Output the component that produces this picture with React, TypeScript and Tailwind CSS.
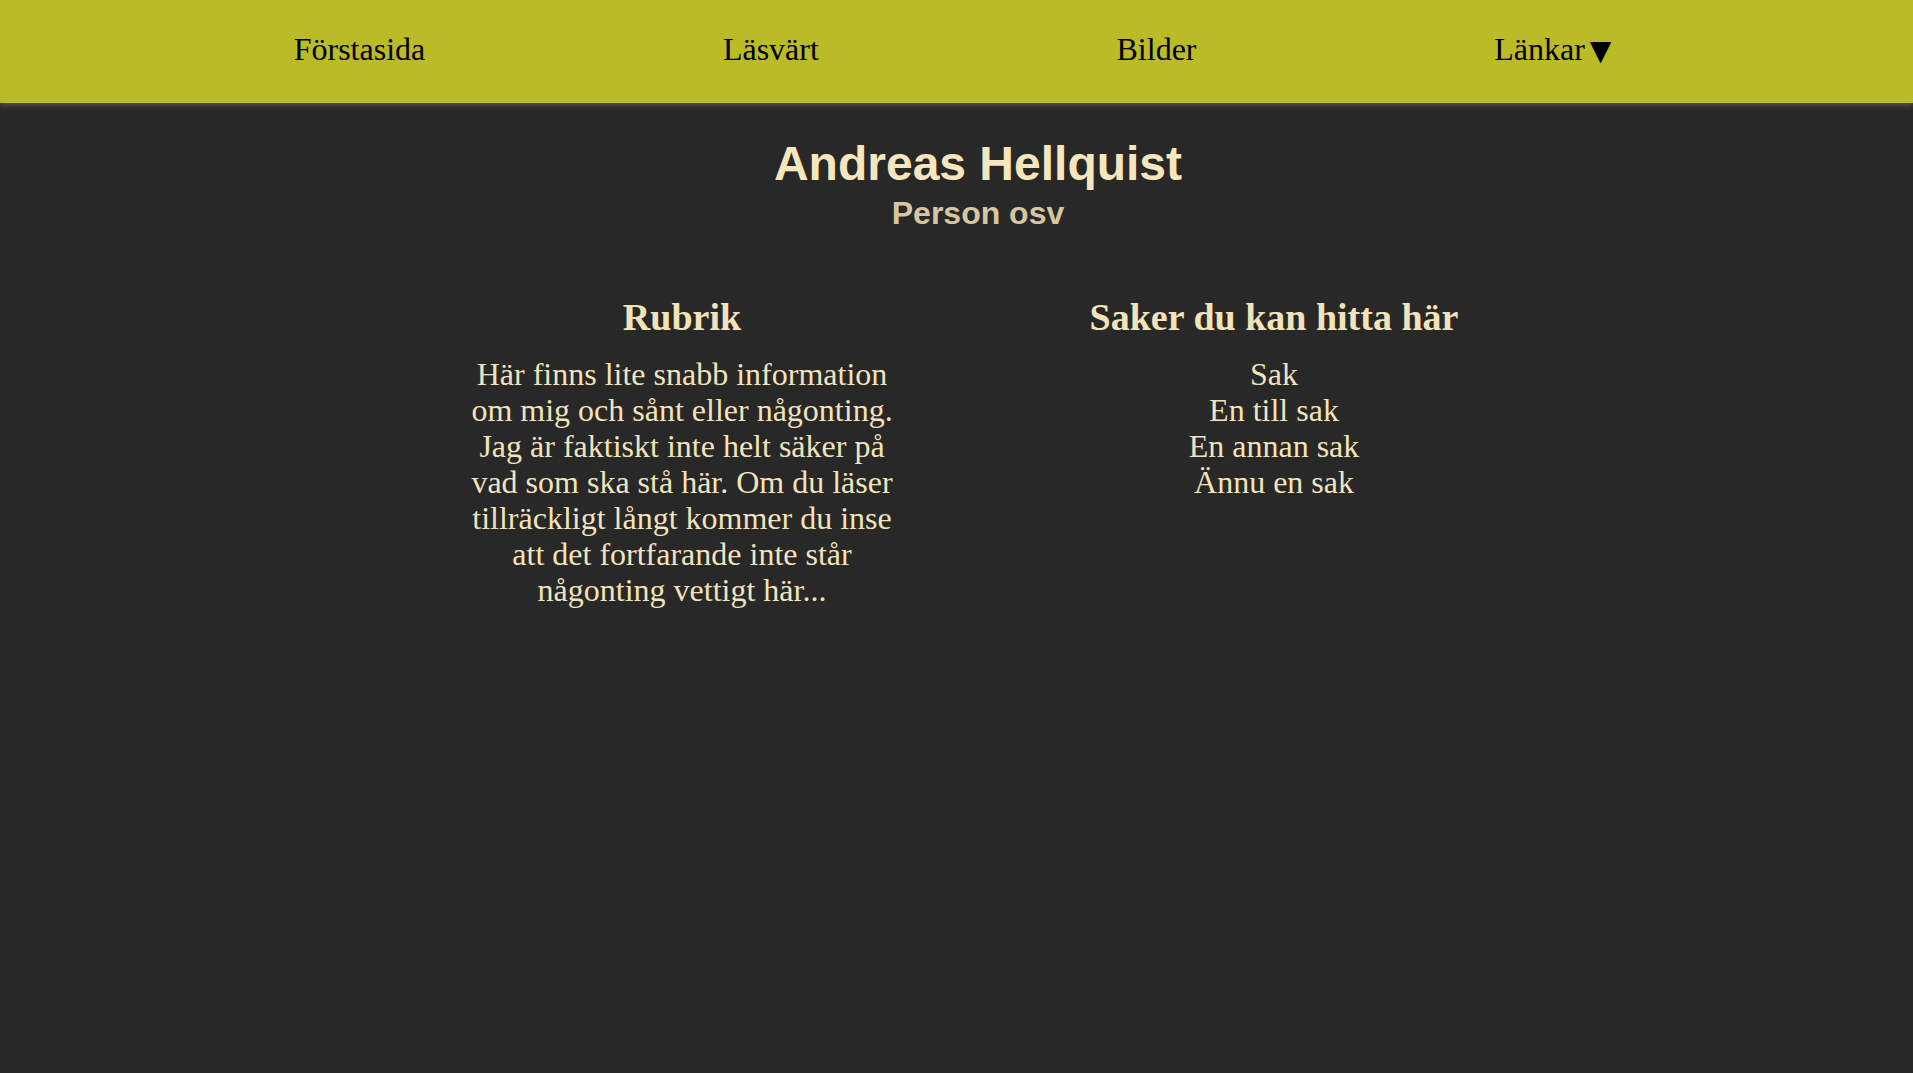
import React from 'react';

const navItems = ['Förstasida', 'Läsvärt', 'Bilder'];

const things = ['Sak', 'En till sak', 'En annan sak', 'Ännu en sak'];

const App: React.FC = () => {
  return (
    <div className="min-h-screen bg-[#282828] font-['Liberation_Serif',serif]">
      {/* Nav */}
      <nav className="h-[103px] bg-[#babb26] shadow-[0_3px_5px_rgba(110,110,110,0.55)] relative">
        <ul className="flex justify-evenly ml-[-4px] mr-[4px] pt-[31px] text-[32px] leading-[normal] text-black">
          {navItems.map((item) => (
            <li key={item}>{item}</li>
          ))}
          <li>
            Länkar
            <span className="ml-[5px] font-['DejaVu_Sans',sans-serif] text-[28px]">▼</span>
          </li>
        </ul>
      </nav>

      <main className="pl-[43px]">
        {/* Header */}
        <header className="text-center font-['Liberation_Sans',sans-serif] font-bold">
          <h1 className="pt-[33px] text-[48px] leading-[normal] text-[#f5e6be]">Andreas Hellquist</h1>
          <h2 className="mt-[4px] text-[32px] leading-[normal] text-[#d6c6a1]">Person osv</h2>
        </header>

        {/* Columns */}
        <div className="flex justify-center mt-[63px] text-center text-[#f2e3bb]">
          <section className="w-[592px] px-[76px]">
            <h3 className="text-[38px] font-bold leading-[normal]">Rubrik</h3>
            <p className="mt-[17px] text-[32px] leading-[36px]">
              Här finns lite snabb information om mig och sånt eller någonting. Jag är faktiskt inte
              helt säker på vad som ska stå här. Om du läser tillräckligt långt kommer du inse att det
              fortfarande inte står någonting vettigt här...
            </p>
          </section>

          <section className="w-[592px] px-[76px]">
            <h3 className="text-[38px] font-bold leading-[normal]">Saker du kan hitta här</h3>
            <ul className="mt-[17px] text-[32px] leading-[36px]">
              {things.map((t) => (
                <li key={t}>{t}</li>
              ))}
            </ul>
          </section>
        </div>
      </main>
    </div>
  );
};

export default App;
